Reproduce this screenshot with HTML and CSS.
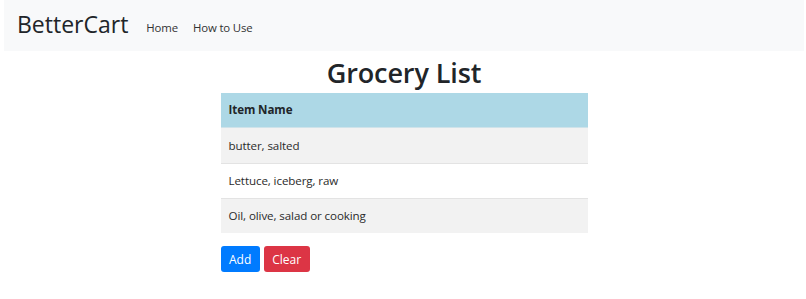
FILE: index.html
```html
<!DOCTYPE html>
<html lang="en">
<head>
<meta charset="utf-8">
<title>BetterCart</title>
<link rel="stylesheet" href="styles.css">
</head>
<body>
<nav class="navbar">
  <a class="brand" href="#">BetterCart</a>
  <ul class="nav-links">
    <li><a href="#">Home</a></li>
    <li><a href="#">How to Use</a></li>
  </ul>
</nav>
<main class="content">
  <h1 class="title">Grocery List</h1>
  <table class="grocery">
    <thead>
      <tr><th>Item Name</th></tr>
    </thead>
    <tbody>
      <tr><td>butter, salted</td></tr>
      <tr><td>Lettuce, iceberg, raw</td></tr>
      <tr><td>Oil, olive, salad or cooking</td></tr>
    </tbody>
  </table>
  <div class="actions">
    <button class="btn btn-add">Add</button>
    <button class="btn btn-clear">Clear</button>
  </div>
</main>
</body>
</html>
```
FILE: styles.css
```css
* { box-sizing: border-box; }
body {
  margin: 0;
  font-family: "Open Sans", "Noto Sans", sans-serif;
  color: #212529;
  background: #fff;
}
.navbar {
  margin: 0 2px 0 4px;
  height: 51px;
  background: #f8f9fa;
  display: flex;
  align-items: center;
  padding: 0 13px;
}
.brand {
  font-size: 23px;
  color: #212529;
  text-decoration: none;
  margin-right: 18px;
  line-height: 1;
  position: relative;
  top: -1px;
}
.nav-links {
  list-style: none;
  display: flex;
  gap: 15px;
  margin: 0;
  padding: 0;
}
.nav-links a {
  font-size: 11.4px;
  letter-spacing: -0.15px;
  color: #333;
  text-decoration: none;
}
.content {
  width: 367px;
  margin: 0 auto;
  display: flex;
  flex-direction: column;
  transform: translateX(1px);
}
.title {
  margin: 3px 0 2px;
  text-align: center;
  font-size: 27px;
  letter-spacing: -0.1px;
  font-weight: 600;
  line-height: 37px;
  color: #212529;
}
.grocery {
  width: 100%;
  border-collapse: collapse;
  font-size: 11.6px;
  letter-spacing: -0.1px;
}
.grocery th {
  text-align: left;
  background: #add8e6;
  font-weight: 700;
  height: 34px;
  padding: 0 8px;
  border-bottom: 1px solid #cfe3ea;
}
.grocery td {
  height: 35px;
  padding: 0 8px;
  color: #2b2b2b;
  border-top: 1px solid #e3e3e3;
}
.grocery tbody tr:first-child td { height: 36px; }
.grocery tbody tr:nth-child(odd) td { background: #f2f2f2; }
.actions {
  display: flex;
  gap: 4px;
  margin-top: 13px;
}
.btn {
  border: none;
  border-radius: 3px;
  color: #fff;
  font-family: inherit;
  font-size: 12px;
  height: 26px;
  padding: 0 8.5px;
  cursor: pointer;
}
.btn-add { background: #007bff; }
.btn-clear { background: #dc3545; }
```
